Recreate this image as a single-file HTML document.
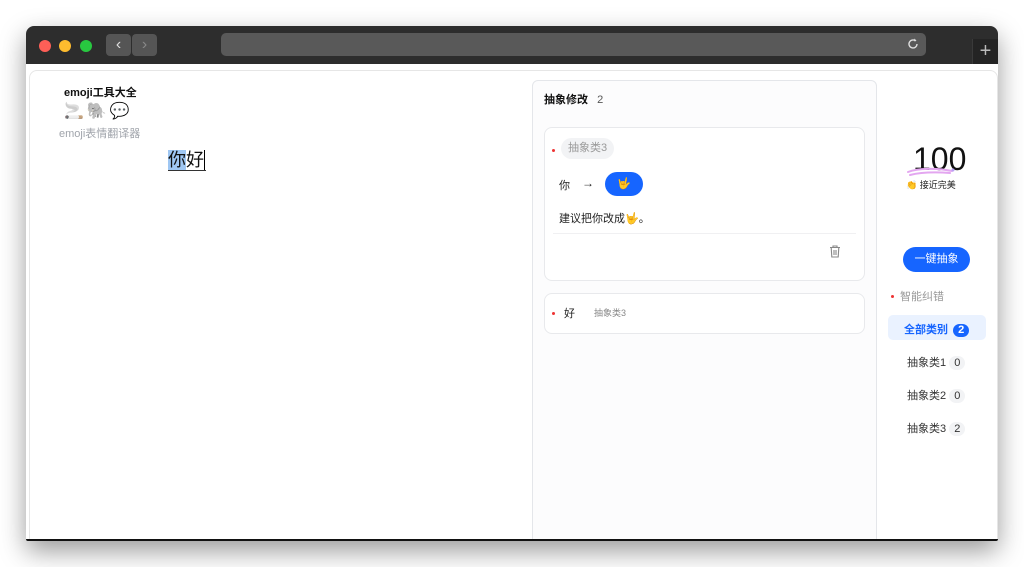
<!DOCTYPE html>
<html><head><meta charset="utf-8"><style>
*{box-sizing:border-box;margin:0;padding:0}
body{width:1024px;height:567px;background:#fff;position:relative;overflow:hidden;font-family:"Liberation Sans","Noto Sans CJK SC",sans-serif;}
.win{position:absolute;left:26px;top:26px;width:972px;height:515px;background:#fff;border-radius:8px 8px 2px 2px;box-shadow:0 10px 26px rgba(0,0,0,.4);overflow:hidden;border-bottom:2px solid #111}
.bar{position:absolute;left:0;top:0;width:972px;height:38px;background:#2d2d2d}
.dot{position:absolute;top:14px;width:12px;height:12px;border-radius:50%}
.nb{position:absolute;top:8px;width:25px;height:22px;background:#555;border-radius:4px;color:#ddd;font-size:16px;text-align:center;line-height:22px}
.url{position:absolute;left:195px;top:7px;width:705px;height:23px;background:#595959;border-radius:5px}
.plus{position:absolute;left:946px;top:13px;width:26px;height:25px;background:#242424;border-left:1px solid #3a3a3a;color:#bbb;font-size:20px;text-align:center;line-height:24px}
.content{position:absolute;left:3px;top:44px;width:969px;height:480px;border:1px solid #e6e6e6;border-radius:8px;background:#fff}
.mid{position:absolute;left:506px;top:54px;width:345px;height:470px;background:#fcfcfd;border:1px solid #e4e6ea;border-radius:6px 6px 0 0}
.card{position:absolute;left:11px;width:321px;background:#fff;border:1px solid #e8e9ec;border-radius:8px}
.red{position:absolute;width:3px;height:3px;background:#e33;border-radius:50%}
</style></head><body>
<div class="win">
 <div class="bar">
  <div class="dot" style="left:13px;background:#fe5f57"></div>
  <div class="dot" style="left:33px;background:#febc2e"></div>
  <div class="dot" style="left:54px;background:#28c840"></div>
  <div class="nb" style="left:80px">&#8249;</div>
  <div class="nb" style="left:106px;color:#888">&#8250;</div>
  <div class="url"><svg width="14" height="14" viewBox="0 0 14 14" style="position:absolute;right:6px;top:4px"><path d="M11 7a4 4 0 1 1-1.3-3" fill="none" stroke="#ddd" stroke-width="1.4"/><path d="M8.5 1.5l2 2.2-2.6.6z" fill="#ddd"/></svg></div>
  <div class="plus">+</div>
 </div>
 <div class="content"></div>
 <div style="position:absolute;left:38px;top:58px;font-size:11px;font-weight:bold;color:#111">emoji工具大全</div>
 <div style="position:absolute;left:38px;top:77px;font-size:16px;line-height:18px;letter-spacing:3px;filter:grayscale(.6)">🚬🐘💬</div>
 <div style="position:absolute;left:33px;top:99px;font-size:11px;color:#a0a4ab">emoji表情翻译器</div>
 <div style="position:absolute;left:142px;top:123px;font-size:18px;color:#111;line-height:22px"><span style="background:#9fc7f3">你</span>好<span style="display:inline-block;width:1px;height:20px;background:#000;vertical-align:-4px"></span></div>
 <div style="position:absolute;left:142px;top:144px;width:38px;height:1px;background:#333"></div>

 <div class="mid">
  <div style="position:absolute;left:11px;top:10px;font-size:11px;font-weight:bold;color:#111">抽象修改 <span style="font-weight:normal;color:#555;margin-left:6px">2</span></div>
  <div class="card" style="top:46px;height:154px">
   <div class="red" style="left:7px;top:21px"></div>
   <div style="position:absolute;left:16px;top:10px;height:21px;padding:0 7px;background:#f2f3f5;border-radius:11px;font-size:11px;color:#999;line-height:21px">抽象类3</div>
   <div style="position:absolute;left:14px;top:49px;font-size:11px;color:#222">你</div>
   <div style="position:absolute;left:37px;top:48px;font-size:12px;color:#222">→</div>
   <div style="position:absolute;left:60px;top:44px;width:38px;height:24px;background:#1665ff;border-radius:12px;text-align:center;line-height:24px;font-size:11px">🤟</div>
   <div style="position:absolute;left:14px;top:82px;font-size:11px;color:#222">建议把你改成🤟。</div>
   <div style="position:absolute;left:8px;top:105px;width:303px;height:1px;background:#f0f0f2"></div>
   <svg width="12" height="13" viewBox="0 0 12 13" style="position:absolute;left:284px;top:117px"><path d="M1 2.5h10M4 2.5V1h4v1.5M2.2 2.5l.6 9.5h6.4l.6-9.5M5 5v5M7 5v5" fill="none" stroke="#888" stroke-width="1.1"/></svg>
  </div>
  <div class="card" style="top:212px;height:41px">
   <div class="red" style="left:7px;top:18px"></div>
   <div style="position:absolute;left:19px;top:11px;font-size:11px;color:#222">好</div>
   <div style="position:absolute;left:49px;top:12px;font-size:9px;color:#888">抽象类3</div>
  </div>
 </div>

 <div style="position:absolute;left:887px;top:113px;font-size:32px;color:#111;line-height:40px">100</div>
 <svg width="52" height="12" style="position:absolute;left:880px;top:140px"><path d="M2 6c10-4 30-4 44-1M4 9c12-3 26-3 40-2" fill="none" stroke="#e3a6f0" stroke-width="2" stroke-linecap="round"/><circle cx="47" cy="4" r="1.5" fill="#b8a2f3"/></svg>
 <div style="position:absolute;left:880px;top:152px;font-size:9px;color:#222">👏 接近完美</div>
 <div style="position:absolute;left:877px;top:221px;width:67px;height:25px;background:#1665ff;border-radius:13px;color:#fff;font-size:11px;text-align:center;line-height:25px">一键抽象</div>
 <div class="red" style="left:865px;top:269px"></div>
 <div style="position:absolute;left:874px;top:262px;font-size:11px;color:#999">智能纠错</div>
 <div style="position:absolute;left:862px;top:289px;width:98px;height:25px;background:#eaf2ff;border-radius:5px"></div>
 <div style="position:absolute;left:878px;top:295px;font-size:11px;font-weight:bold;color:#1665ff">全部类别 <span style="display:inline-block;background:#1665ff;color:#fff;border-radius:7px;padding:0 5px;line-height:13px;margin-left:2px">2</span></div>
 <div style="position:absolute;left:881px;top:328px;font-size:11px;color:#333">抽象类1 <span style="display:inline-block;background:#f2f3f5;border-radius:7px;padding:0 5px;line-height:14px">0</span></div>
 <div style="position:absolute;left:881px;top:361px;font-size:11px;color:#333">抽象类2 <span style="display:inline-block;background:#f2f3f5;border-radius:7px;padding:0 5px;line-height:14px">0</span></div>
 <div style="position:absolute;left:881px;top:394px;font-size:11px;color:#333">抽象类3 <span style="display:inline-block;background:#f2f3f5;border-radius:7px;padding:0 5px;line-height:14px">2</span></div>
</div>
</body></html>
